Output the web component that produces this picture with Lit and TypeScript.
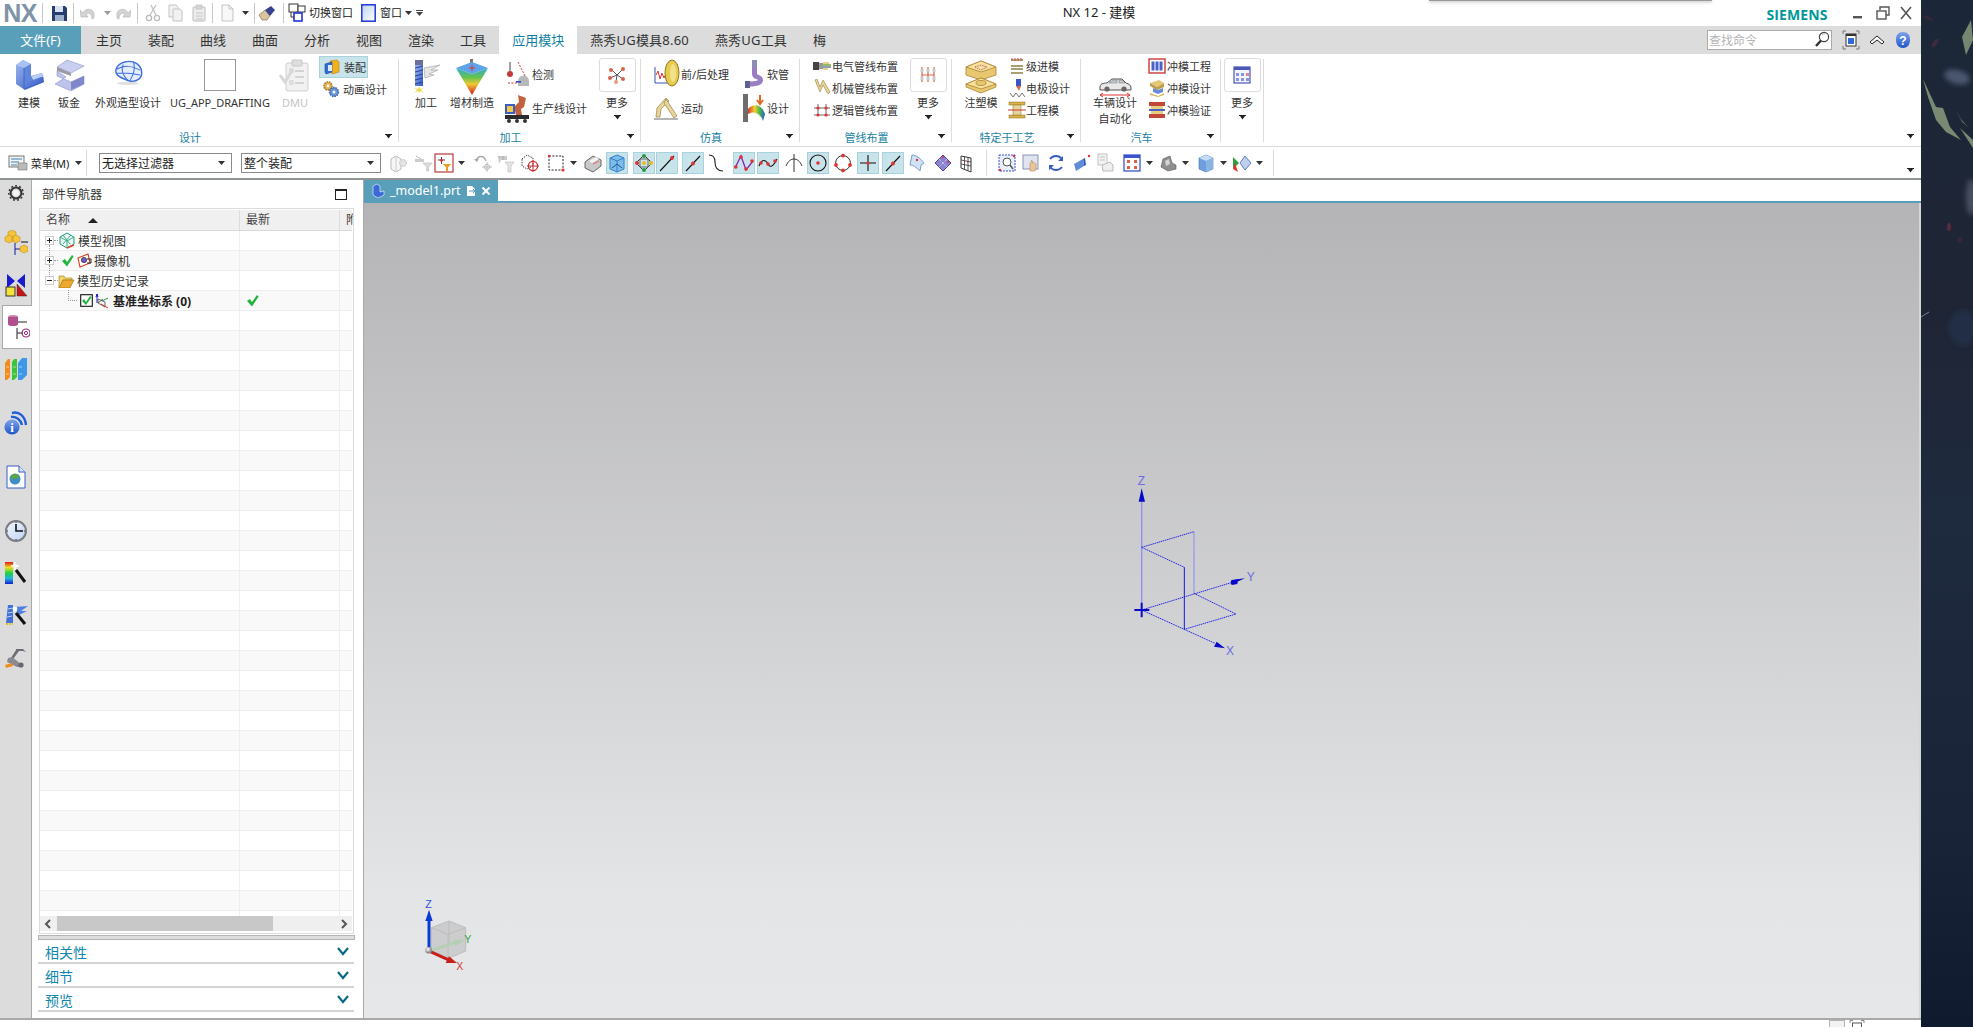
import { LitElement, html, css, svg, nothing } from "lit";
import { customElement } from "lit/decorators.js";

// items are placed in flow, the margin is worked out from the centre each one has in the window
type Placed = { c: number; w: number; t: unknown; cls?: string };

const place = (items: Placed[], start = 0, axis: "left" | "top" = "left") => {
  let end = start;
  return items.map((it) => {
    const gap = Math.round(it.c - it.w / 2 - end);
    end += gap + it.w;
    return html`<div class="slot ${it.cls ?? ""}" style="margin-${axis}:${gap}px;${axis === "left" ? "width" : "height"}:${it.w}px">${it.t}</div>`;
  });
};

const ic = (w: number, h: number, body: unknown, vb?: string) =>
  html`<svg class="ic" width=${w} height=${h} viewBox=${vb ?? `0 0 ${w} ${h}`}>${body}</svg>`;

const caret = html`<svg class="ic" width="7" height="5" viewBox="0 0 7 5"><path d="M0 0h7v1H6L3.5 4.5 1 1H0z" fill="#222"/></svg>`;
const tri = html`<svg class="ic" width="7" height="4" viewBox="0 0 7 4"><path d="M0 0h7L3.5 4z" fill="#333"/></svg>`;
const triGray = html`<svg class="ic" width="7" height="4" viewBox="0 0 7 4"><path d="M0 0h7L3.5 4z" fill="#999"/></svg>`;

/* ---------- ribbon icons ---------- */
const big = {
  model: ic(32, 32, svg`
    <path d="M3 6 10 1l8 4v12l11-3 2 9-19 8-9-6z" fill="url(#gBlue)"/>
    <path d="M3 6 10 1l8 4-7 4z" fill="#a9c2f2"/>
    <path d="M18 17l11-3 2 3-11 4z" fill="#b9cdf5"/>
    <path d="M11 9l7-4v12l2 4-9 4z" fill="#5f86dc"/>
    <path d="M11 9v21l19-7v-5" fill="none" stroke="#3c61bd" stroke-width=".8"/>`),
  sheet: ic(32, 32, svg`
    <path d="M14 1 31 7l-13 7L4 8z" fill="#c9cfee" stroke="#8e94cc" stroke-width=".6"/>
    <path d="M4 8l14 6 0 3L4 12z" fill="#9a9ba6"/>
    <path d="M4 12v5l14 6 13-6v8l-13 7L2 25l11-7z" fill="#bdc4ea" stroke="#8e94cc" stroke-width=".6"/>
    <path d="M18 23l13-6v8l-13 6z" fill="#7f86c9"/>`),
  shape: ic(32, 27, svg`
    <path d="M5 12C8 3 22-1 31 5c7 5 8 14 3 19-4 3-9 4-14 2C12 23 3 20 5 12z" fill="#e4edfd" stroke="#3f6fe0" stroke-width="1.8"/>
    <path d="M6 12c8-5 19-5 29 1M14 6c-3 6-2 12 6 20M27 3c2 7 1 14-4 22M5 17c9-1 21 0 30 2" fill="none" stroke="#3f6fe0" stroke-width="1.3"/>
    <ellipse cx="20" cy="29.5" rx="14" ry="2" fill="#dedede"/>`, "0 0 40 32"),
  drafting: html`<div class="blank"></div>`,
  dmu: ic(32, 34, svg`
    <rect x="7" y="4" width="22" height="28" rx="2" fill="#f1f1f1" stroke="#cfcfcf"/>
    <rect x="13" y="1" width="10" height="6" rx="1" fill="#dedede" stroke="#c6c6c6"/>
    <path d="M16 12h9M16 18h9M16 24h9" stroke="#c9c9c9" stroke-width="1.6"/>
    <rect x="11" y="10" width="3" height="3" fill="none" stroke="#ccc"/><rect x="11" y="22" width="3" height="3" fill="none" stroke="#ccc"/>
    <path d="M1 16l5 7 8-13" fill="none" stroke="#d8d8d8" stroke-width="3"/>`),
  mill: ic(32, 34, svg`
    <rect x="5" y="1" width="8" height="6" fill="#6e6e9a"/>
    <rect x="5" y="6" width="8" height="21" fill="url(#gBlue)"/>
    <path d="M5 9l8-2M5 13l8-2M5 17l8-2M5 21l8-2M5 25l8-2" stroke="#2a3f9a" stroke-width="1"/>
    <path d="M14 9l16-3-9 5 7 0-9 4 5 1-9 3z" fill="#e6e6e6" stroke="#9a9a9a" stroke-width=".6"/>
    <path d="M9 27l-1 3-4-1 3 2-3 3 4-2 1 2 1-2 4 2-3-3 3-2-4 1z" fill="#ecd84a"/>`),
  additive: ic(34, 36, svg`
    <rect x="15" y="0" width="3" height="7" fill="#777"/>
    <path d="M1 9 17 3l16 6-16 6z" fill="#5ea3e8"/>
    <path d="M1 9l16 6 16-6-16 27z" fill="url(#gCone)"/>
    <path d="M14 9h6M17 6v6" stroke="#d33" stroke-width="1"/>`),
  mould: ic(34, 36, svg`
    <path d="M2 8 17 2l15 6v8l-15 5L2 16z" fill="#e8c770" stroke="#a98732" stroke-width=".8"/>
    <path d="M2 8l15 5 15-5-15-6z" fill="#f6e09e" stroke="#a98732" stroke-width=".8"/>
    <path d="M11 8l6-2 6 2-6 3z" fill="none" stroke="#c2616a" stroke-dasharray="1.5 1"/>
    <path d="M2 25l15-6 15 6v3l-15 6-15-6z" fill="#e8c770" stroke="#a98732" stroke-width=".8"/>
    <path d="M2 25l15 5 15-5-15-6z" fill="#f6e09e" stroke="#a98732" stroke-width=".8"/>
    <ellipse cx="17" cy="24" rx="5" ry="2.5" fill="#e8c770" stroke="#a98732" stroke-width=".8"/>`),
  car: ic(34, 24, svg`
    <path d="M2 13c0-3 3-4 7-4l5-4h10l4 4c3 1 5 2 5 5v2H2z" fill="#e8e8e8" stroke="#555" stroke-width="1"/>
    <path d="M11 9l4-3h4v3zM21 6h3l3 3h-6z" fill="#bfc9d2" stroke="#777" stroke-width=".5"/>
    <circle cx="9" cy="15" r="2.6" fill="#666"/><circle cx="26" cy="15" r="2.6" fill="#666"/>
    <path d="M2 21h30M2 21l3-2M2 21l3 2M32 21l-3-2M32 21l-3 2" stroke="#d33" stroke-width="1" fill="none"/>`),
};

const more = {
  spark: ic(20, 20, svg`
    <path d="M10 10 4 4M10 10l6-6M10 10 3 13M10 10l6 4M10 10 9 17" stroke="#555" stroke-width="1"/>
    <circle cx="4" cy="5" r="2" fill="#d8634a"/><circle cx="16" cy="4" r="2" fill="#d8634a"/>
    <circle cx="3" cy="13" r="2" fill="#d8634a"/><circle cx="16" cy="14" r="2" fill="#d8634a"/>
    <circle cx="9" cy="17" r="2" fill="#e0a080"/>`),
  pipes: ic(20, 20, svg`
    <path d="M4 2v15M10 2v15M16 2v15M4 10h12" stroke="#d8634a" stroke-width="1.2" fill="none"/>
    <rect x="2.5" y="4" width="3" height="3" fill="#c9c9c9"/><rect x="8.5" y="4" width="3" height="3" fill="#c9c9c9"/>
    <rect x="14.5" y="4" width="3" height="3" fill="#c9c9c9"/><rect x="2.5" y="12" width="3" height="3" fill="#c9c9c9"/>
    <rect x="8.5" y="12" width="3" height="3" fill="#c9c9c9"/><rect x="14.5" y="12" width="3" height="3" fill="#c9c9c9"/>`),
  table: ic(20, 20, svg`
    <rect x="2" y="2" width="16" height="16" fill="#f2f4fb" stroke="#4a56b8" stroke-width="1.2"/>
    <rect x="2" y="2" width="16" height="3" fill="#4a56b8"/>
    <path d="M4 8h3v3H4zM9 8h3v3H9zM14 8h3v3h-3zM4 13h3v3H4zM9 13h3v3H9zM14 13h3v3h-3z" fill="#8b94d8"/>
    <rect x="14" y="8" width="3" height="3" fill="#d88"/>`),
};

const small = {
  asm: ic(16, 16, svg`
    <path d="M6 2l7-1 2 2v10l-7 2z" fill="#f2b21c" stroke="#b97f10" stroke-width=".6"/>
    <path d="M1 5l7-2v10l-6 2-1-2z" fill="#2f6fd8" stroke="#1c3f8e" stroke-width=".6"/>
    <rect x="4" y="6" width="4" height="6" fill="#dfeaff"/>`),
  anim: ic(18, 18, svg`
    <circle cx="6" cy="6" r="4" fill="#e5b253" stroke="#a97f2c" stroke-dasharray="1.6 .8" stroke-width="1.6"/>
    <circle cx="6" cy="6" r="1.4" fill="#fff"/>
    <circle cx="12" cy="12" r="4.4" fill="#6b96d8" stroke="#3d63a8" stroke-dasharray="1.6 .8" stroke-width="1.6"/>
    <circle cx="12" cy="12" r="1.5" fill="#fff"/>`),
  inspect: ic(24, 30, svg`
    <path d="M5 3v9" stroke="#666" stroke-width="1.2"/><circle cx="5" cy="15" r="3" fill="#c23a3a"/>
    <path d="M13 3l7 14" stroke="#d33" stroke-dasharray="2 1.4"/>
    <path d="M3 24h11" stroke="#d33" stroke-dasharray="2 1.4"/>
    <path d="M13 27v-5a5.5 5.5 0 0 1 11 0v5z" fill="#b8b8b8"/><rect x="11" y="22" width="5" height="1.6" fill="#2746c8"/>`),
  line: ic(26, 30, svg`
    <path d="M14 2l8 3-2 9-3 2 1 6h-6l-2-8 5-5z" fill="#c2613e"/>
    <rect x="1" y="11" width="10" height="10" fill="#3a5ec2"/><rect x="3" y="13" width="6" height="6" fill="#f2c94c"/>
    <rect x="1" y="22" width="24" height="4" fill="#2b2b2b"/>
    <circle cx="5" cy="28" r="2" fill="#333"/><circle cx="13" cy="28" r="2" fill="#333"/><circle cx="21" cy="28" r="2" fill="#333"/>`),
  prepost: ic(26, 30, svg`
    <path d="M1 8v16h14" fill="none" stroke="#3555b8" stroke-width="1"/>
    <path d="M2 16l2-4 2 8 2-6 2 5 2-4 3 2" fill="none" stroke="#d33" stroke-width="1"/>
    <ellipse cx="18" cy="14" rx="7" ry="13" fill="#e6cb4e" stroke="#8e7a22"/>
    <ellipse cx="19" cy="14" rx="3" ry="9" fill="#f3e28d"/>`),
  motion: ic(27, 26, svg`
    <path d="M1 24h24" stroke="#b4b4b4" stroke-width="2"/>
    <path d="M3 22 4 13l9-10 3 3-8 8-1 8z" fill="#e8d59a" stroke="#978349" stroke-width=".7"/>
    <path d="M13 4l11 17-3 2L11 8z" fill="#e8d59a" stroke="#978349" stroke-width=".7"/>`),
  hose: ic(22, 30, svg`
    <rect x="9" y="1" width="5" height="7" fill="#8d8db3"/>
    <path d="M11.5 8v7c0 4 6 2 6 6 0 3-5 4-11 4" fill="none" stroke="#9a7ec4" stroke-width="5"/>
    <rect x="2" y="22" width="5" height="7" fill="#5f5f92"/>`),
  design: ic(24, 30, svg`
    <rect x="1" y="1" width="5" height="28" fill="#6d6d6d"/>
    <path d="M6 16c5-6 14-5 17 5l-2 7c-2-7-9-11-15-7z" fill="url(#gFlow)"/>
    <path d="M18 2v8M15 7l3 4 3-4" fill="none" stroke="#e06a24" stroke-width="2"/>`),
  wire: ic(18, 12, svg`
    <rect x="0" y="2" width="6" height="8" fill="#444"/><rect x="6" y="3" width="4" height="6" fill="#999"/>
    <path d="M10 3h6M10 5h8M10 7h8M10 9h5" stroke-width="1.2" stroke="#d8a020"/><path d="M10 5h8" stroke="#3aa544"/><path d="M10 7h8" stroke="#3a6ad8"/>`),
  mech: ic(18, 18, svg`
    <path d="M2 1l5 12 3-7 5 9 2-2-7-12-3 7-3-8z" fill="#e8d59a" stroke="#a8914e" stroke-width=".7"/>`),
  logic: ic(18, 18, svg`
    <path d="M1 7h16M1 14h16M5 3v12M13 3v12" stroke="#444" stroke-width=".8"/>
    <circle cx="5" cy="7" r="1.6" fill="#d33"/><circle cx="13" cy="7" r="1.6" fill="#d33"/>
    <circle cx="5" cy="14" r="1.6" fill="#d33"/><circle cx="13" cy="14" r="1.6" fill="#d33"/>`),
  prog: ic(16, 18, svg`
    <path d="M2 3h12M2 9h12M2 12h12M2 16h12" stroke="#8c8148" stroke-width="1.6"/>
    <path d="M3 1v3M6 1v3M9 1v3M12 1v3" stroke="#c55" stroke-width="1"/>`),
  electrode: ic(16, 20, svg`
    <rect x="7" y="1" width="5" height="7" fill="#3d55c0"/><path d="M7 8h5l-2 5z" fill="#d86a4a"/>
    <path d="M1 15l3 4 3-4 3 4 3-4 3 4" fill="none" stroke="#777"/>`),
  eng: ic(18, 18, svg`
    <rect x="1" y="1" width="16" height="3" fill="#d8b24a" stroke="#8a6f25" stroke-width=".5"/><rect x="1" y="14" width="16" height="3" fill="#d8b24a" stroke="#8a6f25" stroke-width=".5"/>
    <rect x="5" y="4" width="8" height="10" fill="#e6d59a" stroke="#8a6f25" stroke-width=".5"/>
    <path d="M0 9h18" stroke="#c33"/>`),
  die: ic(18, 16, svg`
    <rect x="1" y="1" width="16" height="14" fill="#fff" stroke="#c83a3a" stroke-width="1.4"/>
    <rect x="3.5" y="3.5" width="3" height="9" fill="#4a62c8"/><rect x="7.5" y="3.5" width="3" height="9" fill="#4a62c8"/><rect x="11.5" y="3.5" width="3" height="9" fill="#4a62c8"/>`),
  dieD: ic(18, 18, svg`
    <path d="M2 4l9-3 5 3-7 4z" fill="#e4c878"/><path d="M2 4v3l7 4 7-3V4l-7 4z" fill="#bf9d45"/>
    <path d="M5 9l5 2 5-2v4l-5 2-5-2z" fill="#6b8ad8"/><path d="M2 14l8 3 6-3v2l-6 2-8-2z" fill="#d6b85e"/>`),
  dieV: ic(18, 18, svg`
    <rect x="1" y="1" width="16" height="4" fill="#c0473a"/><rect x="1" y="13" width="16" height="4" fill="#c0473a"/>
    <rect x="3" y="5" width="12" height="3" fill="#e6cf7c"/><rect x="3" y="10" width="12" height="3" fill="#e6cf7c"/>
    <rect x="1" y="8" width="16" height="2" fill="#4a62c8"/>`),
};

/* ---------- quick access and toolbar icons ---------- */
const q = {
  save: ic(18, 18, svg`<path d="M2 2h13l2 2v13H2z" fill="#263d6e"/><rect x="5" y="2" width="8" height="6" fill="#d8e2f2"/><rect x="5" y="11" width="9" height="6" fill="#9eb0cc"/>`),
  undo: ic(16, 16, svg`<path d="M3 8c2-5 9-5 11 0v5l-2 1c0-4-2-7-6-5l2 3-7 0-1-7z" fill="#d4d4d4" stroke="#b0b0b0" stroke-width=".6"/>`),
  redo: ic(16, 16, svg`<path d="M13 8c-2-5-9-5-11 0v5l2 1c0-4 2-7 6-5l-2 3 7 0 1-7z" fill="#d4d4d4" stroke="#b0b0b0" stroke-width=".6"/>`),
  cut: ic(16, 18, svg`<path d="M12 1 6 11M7 1l5 10" stroke="#c4c4c4" stroke-width="1.4"/><circle cx="5" cy="14" r="2.6" fill="none" stroke="#bdbdbd" stroke-width="1.4"/><circle cx="13" cy="14" r="2.6" fill="none" stroke="#bdbdbd" stroke-width="1.4"/>`),
  copy: ic(16, 18, svg`<path d="M2 1h7l2 2v10H2z" fill="#f2f2f2" stroke="#c4c4c4"/><path d="M6 5h7l2 2v10H6z" fill="#f2f2f2" stroke="#c4c4c4"/>`),
  paste: ic(16, 18, svg`<rect x="2" y="3" width="12" height="14" rx="1" fill="#ececec" stroke="#bdbdbd"/><rect x="5" y="1" width="6" height="4" fill="#d4d4d4" stroke="#bdbdbd" stroke-width=".6"/><path d="M5 9h7M5 12h7M5 15h7" stroke="#c6c6c6"/>`),
  page: ic(14, 18, svg`<path d="M2 1h7l4 4v12H2z" fill="#f8f8f8" stroke="#c4c4c4"/><path d="M9 1v4h4" fill="none" stroke="#c4c4c4"/>`),
  eraser: ic(18, 16, svg`<path d="M1 10l6-5 5 6-3 4H4z" fill="#d8c49a" stroke="#7d6a44" stroke-width=".6"/><path d="M7 5l6-4 4 4-5 6z" fill="#37418f"/>`),
  sw: ic(18, 20, svg`<rect x="1" y="1" width="9" height="8" fill="#fff" stroke="#333"/><rect x="10" y="3" width="7" height="6" fill="#fff" stroke="#333"/><rect x="6" y="10" width="8" height="8" fill="#fff" stroke="#1e36d8" stroke-width="1.6"/><path d="M3 9v5h3" fill="none" stroke="#333"/>`),
  win: ic(15, 18, svg`<rect x=".8" y=".8" width="13.4" height="16.4" fill="url(#gWin)" stroke="#1e36d8" stroke-width="1.5"/>`),
  funnelBar: html`<svg class="ic" width="7" height="6" viewBox="0 0 7 6"><path d="M0 0h7v1H0zM0 2h7L3.5 6z" fill="#444"/></svg>`,
  search: ic(16, 18, svg`<circle cx="10" cy="6" r="4.6" fill="#fff" stroke="#444" stroke-width="1.2"/><path d="M7 9.5 2 15" stroke="#333" stroke-width="2.4"/><path d="M8 4a3 3 0 0 1 3-1" stroke="#aaa" fill="none"/>`),
  full: ic(18, 20, svg`<path d="M1 4V1h3M14 1h3v3M1 16v3h3M14 19h3v-3" stroke="#777" fill="none"/><rect x="4" y="4" width="10" height="12" fill="#fff" stroke="#333"/><rect x="4" y="4" width="10" height="2" fill="#333"/><rect x="6" y="8" width="6" height="6" fill="#2e6ad8"/>`),
  up: ic(16, 12, svg`<path d="M1 8l7-6 7 6-2 2-5-4-5 4z" fill="#fff" stroke="#222"/>`),
  help: ic(16, 18, svg`<path d="M8 1c5 0 7 3 7 8s-3 8-7 8-7-3-7-8 2-8 7-8z" fill="url(#gHelp)"/><text x="8" y="13.5" text-anchor="middle" font-size="12" font-weight="700" font-family="Liberation Sans" fill="#fff">?</text>`),
};

const box = (s: unknown) => ic(20, 20, s);
const t = {
  partG: box(svg`<path d="M3 6l5-3 5 3v10l-5 3-5-3z" fill="#f6f6f6" stroke="#bbb"/><path d="M8 3v16" stroke="#ccc"/><circle cx="15" cy="10" r="3.4" fill="#e4e4e4" stroke="#bbb" stroke-dasharray="1.4 .8"/>`),
  fun: box(svg`<path d="M1 6h9v3H1z" fill="#ccc"/><path d="M9 10h9l-3.4 4v4h-2v-4z" fill="#ddd" stroke="#bbb" stroke-width=".6"/><path d="M2 3l5 3" stroke="#bbb"/>`),
  redBox: box(svg`<rect x="1" y="1" width="18" height="18" fill="#fff" stroke="#b8383d" stroke-width="1.2"/><path d="M4 7h7M7.5 4v7" stroke="#444"/><circle cx="7.5" cy="7.5" r="1.4" fill="#d33"/><path d="M9 11h8l-3 3.4V18h-2v-3.6z" fill="#e8a020"/>`),
  arrowCross: box(svg`<path d="M3 8C5 2 11 2 13 8" fill="none" stroke="#aaa" stroke-width="1.4"/><path d="M1 6l3 3 2-3z" fill="#aaa"/><path d="M14 9v10M9 14h10" stroke="#bbb"/><circle cx="14" cy="14" r="2.6" fill="none" stroke="#bbb"/>`),
  partF: box(svg`<path d="M2 3h9v4H5l-2 4z" fill="#ccc"/><path d="M2 3l2 2M7 3v4" stroke="#aaa"/><path d="M9 9h9l-3 4v6h-3v-6z" fill="#e4e4e4" stroke="#bbb" stroke-width=".6"/>`),
  dotCube: box(svg`<path d="M2 6l5-4 6 3v8l-6 3-5-3z" fill="none" stroke="#333" stroke-dasharray="1.4 1.2"/><circle cx="13" cy="13" r="4.6" fill="none" stroke="#c82a2a" stroke-width="1.2"/><path d="M13 7v12M7 13h12" stroke="#c82a2a"/>`),
  dash: box(svg`<rect x="3" y="3" width="14" height="14" fill="none" stroke="#222" stroke-dasharray="2 1.4"/><circle cx="17" cy="17" r="1.6" fill="#d33"/><circle cx="3" cy="3" r="1.2" fill="#d33"/>`),
  grayBox: box(svg`<path d="M2 9l8-6 8 4v6l-8 6-8-4z" fill="#c8c8c8" stroke="#666"/><path d="M6 8l7-4 3 2-7 4z" fill="#f4f4f4"/><path d="M10 11l6-3" stroke="#d66"/>`),
  blueCube: box(svg`<path d="M3 5l7-3 7 3v11l-7 3-7-3z" fill="#7fbce8" stroke="#3082c8"/><path d="M3 5l7 3 7-3M10 8v11" fill="none" stroke="#3082c8"/><path d="M5 15l5-4 5 4" fill="none" stroke="#1c4fa0"/>`),
  star: box(svg`<path d="M10 2 18 10 10 18 2 10z" fill="none" stroke="#333"/><path d="M6 6h8v8H6z" fill="none" stroke="#666"/><circle cx="10" cy="3" r="2" fill="#2c9a3c"/><circle cx="3" cy="10" r="2" fill="#d33"/><circle cx="17" cy="10" r="2" fill="#e0c020"/><circle cx="10" cy="17" r="2" fill="#2c9a3c"/><circle cx="10" cy="10" r="2" fill="#e0c020"/>`),
  lineEnd: box(svg`<path d="M3 18 17 3" stroke="#111" stroke-width="1.1"/><circle cx="15" cy="5" r="1.9" fill="#d33"/>`),
  lineMid: box(svg`<path d="M3 18 17 3" stroke="#111" stroke-width="1.1"/><circle cx="10" cy="10.5" r="2" fill="#d33"/>`),
  scurve: box(svg`<path d="M3 2c4 0 6 2 6 7s2 9 8 9" fill="none" stroke="#222" stroke-width="1.1"/>`),
  zig: box(svg`<path d="M1 15 7 3l5 14 7-9" fill="none" stroke="#8a1fa8" stroke-width="1.3"/><circle cx="7" cy="4" r="1.8" fill="#d33"/><circle cx="1.8" cy="14" r="1.8" fill="#d33"/><circle cx="12" cy="16" r="1.8" fill="#d33"/><circle cx="18" cy="8" r="1.8" fill="#d33"/>`),
  wave: box(svg`<path d="M1 13c3-8 7-6 9-2s5 3 9-5" fill="none" stroke="#111" stroke-width="1.1"/><circle cx="3" cy="10" r="1.8" fill="#d33"/><circle cx="10" cy="11" r="1.8" fill="#d33"/><circle cx="17" cy="8" r="1.8" fill="#d33"/>`),
  arc: box(svg`<path d="M2 13c2-5 5-7 8-7s6 2 8 7M10 1v18" fill="none" stroke="#333"/>`),
  circle: box(svg`<circle cx="10" cy="10" r="8" fill="none" stroke="#111" stroke-width="1.1"/><circle cx="10" cy="10" r="1.8" fill="#d33"/>`),
  circleP: box(svg`<circle cx="10" cy="10" r="7.4" fill="none" stroke="#333"/><circle cx="10" cy="2.6" r="1.9" fill="#d33"/><circle cx="3" cy="12" r="1.9" fill="#d33"/><circle cx="17" cy="12" r="1.9" fill="#d33"/><circle cx="10" cy="17.4" r="1.9" fill="#d33"/>`),
  cross: box(svg`<path d="M10 2v16M2 10h16" stroke="#111" stroke-width="1.1"/><circle cx="10" cy="10" r="1.6" fill="#d33"/>`),
  diag: box(svg`<path d="M3 18 17 3" stroke="#111" stroke-width="1.1"/><circle cx="10" cy="10.5" r="2" fill="#d33"/>`),
  surf: box(svg`<path d="M4 2c4 0 8 3 12 8l-3 2-1 6C8 14 5 12 2 12z" fill="#cfe2f6" stroke="#7c9cc4"/><circle cx="9" cy="7" r="1.2" fill="#d33"/>`),
  diamond: box(svg`<path d="M10 2l8 8-8 8-8-8z" fill="#8a83cf" stroke="#4d47a0"/><path d="M6 6l8 8M14 6l-8 8" stroke="#fff" stroke-width=".7" stroke-dasharray="1 1"/><circle cx="10" cy="4" r="1" fill="#d33"/><circle cx="15" cy="9" r="1" fill="#d33"/>`),
  grid: box(svg`<path d="M4 3l10 2v14L4 15z" fill="#fff" stroke="#333"/><path d="M4 7l10 2M4 11l10 2M7.5 4v12M11 4.5v13" stroke="#333" stroke-width=".8"/><path d="M7 8h1M10 9h1" stroke="#c33"/>`),
  zoomF: box(svg`<rect x="2" y="2" width="16" height="16" fill="#e9eefc" stroke="#3b55c8" stroke-dasharray="2 1"/><circle cx="10" cy="9" r="4" fill="#fff" stroke="#555"/><path d="M13 12l3 4" stroke="#555" stroke-width="1.4"/><circle cx="3" cy="17" r="1.2" fill="#d33"/><circle cx="17" cy="3" r="1.2" fill="#d33"/>`),
  hand: box(svg`<rect x="2" y="2" width="15" height="14" fill="#dfe4f0" stroke="#8a93b8"/><path d="M9 18V10l1.4-1V7l1 1v2l1-1 1 1 1.6 1v5l-1 2z" fill="#e8c49a" stroke="#b98e60" stroke-width=".6"/>`),
  rot: box(svg`<path d="M4 6c3-4 9-4 12 0M16 14c-3 4-9 4-12 0" fill="none" stroke="#3a5ec8" stroke-width="1.8"/><path d="M17 3v5h-5zM3 17v-5h5z" fill="#3a5ec8"/>`),
  prism: box(svg`<path d="M2 11l9-5 1 7-8 5z" fill="#5f8bd8"/><path d="M11 6l2-1 1 7-2 1z" fill="#2f5fb8"/><circle cx="17" cy="3" r="1.2" fill="#d33"/>`),
  docG: box(svg`<rect x="3" y="1" width="9" height="11" fill="#f2f2f2" stroke="#c4c4c4"/><path d="M5 4h5M5 7h5" stroke="#c4c4c4"/><path d="M7 12l8-3 3 3v6H8z" fill="#eee" stroke="#bbb"/>`),
  winR: box(svg`<rect x="2" y="2" width="16" height="16" fill="#fff" stroke="#3b55c8" stroke-width="1.3"/><rect x="2" y="2" width="16" height="3" fill="#3b55c8"/><path d="M5 7h3v3H5zM12 7h3v3h-3zM5 13h3v3H5zM12 13h3v3h-3z" fill="#d8634a"/>`),
  part: box(svg`<path d="M3 14l2-8 7-3 2 7 4 2v4l-8 2z" fill="#8e8e8e" stroke="#555" stroke-width=".6"/><path d="M7 8l4-2 1 5-4 2z" fill="#d4d4d4"/>`),
  cube: box(svg`<path d="M3 5l7-3 7 3v11l-7 3-7-3z" fill="#6e9edc" stroke="#4a74b8" stroke-width=".6"/><path d="M3 5l7 3 7-3-7-3z" fill="#c4dcf6"/><path d="M10 8v11l7-3V5z" fill="#8bb4e6"/>`),
  flip: box(svg`<path d="M1 4l6 6-6 6z" fill="#2fa044"/><path d="M3 10l3 9-5-3z" fill="#d33"/><path d="M13 3l6 7-6 7-5-7z" fill="#bdd0ee" stroke="#5f7ec4"/>`),
  menu: ic(20, 20, svg`<rect x="1" y="3" width="15" height="11" fill="#f4f4f4" stroke="#777"/><path d="M3 6h11M3 9h8M3 12h6" stroke="#3a7fb0"/><path d="M10 10h9v7h-9z" fill="#bbb" stroke="#777" stroke-width=".6"/>`),
};

/* ---------- left rail ---------- */
const rail = {
  gear: ic(18, 18, svg`<circle cx="9" cy="9" r="5.4" fill="none" stroke="#333" stroke-width="2"/><circle cx="9" cy="9" r="7.2" fill="none" stroke="#333" stroke-width="1.4" stroke-dasharray="2 2.1"/><circle cx="9" cy="9" r="3" fill="#f4f4f4"/>`),
  assem: ic(24, 26, svg`
    <path d="M4 2l4-2 4 2v4l-4 2-4-2z" fill="#f2c53c" stroke="#c78f1c" stroke-width=".6"/>
    <path d="M1 7l4-2 4 2v4l-4 2-4-2zM8 7l4-2 4 2v4l-4 2-4-2z" fill="#f2c53c" stroke="#c78f1c" stroke-width=".6"/>
    <path d="M11 13V25M11 19h7" stroke="#1a1a9a" stroke-width="1"/><path d="M17 12h7" stroke="#111"/>
    <path d="M16 17l4-2 4 2v4l-4 2-4-2z" fill="#f2c53c" stroke="#c78f1c" stroke-width=".6"/>`),
  constraint: ic(24, 26, svg`
    <path d="M3 2l8 7-8 7zM21 2l-8 7 8 7z" fill="#1a1ad0"/><rect x="2" y="15" width="9" height="9" fill="#f5e23a" stroke="#333"/>
    <path d="M13 24V12l10 12z" fill="#c81414" stroke="#333" stroke-width=".5"/>`),
  part: ic(24, 26, svg`
    <ellipse cx="7" cy="3" rx="5" ry="2" fill="#c880a8"/><rect x="2" y="3" width="10" height="7" fill="#b0508c"/><ellipse cx="7" cy="10" rx="5" ry="2" fill="#b0508c"/>
    <path d="M12 8h9M11 14v11M11 19h6" stroke="#222" stroke-width="1"/>
    <circle cx="20" cy="19" r="4" fill="none" stroke="#92287c" stroke-width="1.2"/><circle cx="20" cy="19" r="1.6" fill="none" stroke="#92287c"/>`),
  books: ic(24, 24, svg`
    <path d="M1 6l3-4h2v18l-3 3H1z" fill="#ef8c1c"/><path d="M8 5l2-3h3v18l-3 3H8z" fill="#3ec43a"/>
    <path d="M14 6l4-5h5v17l-5 5h-4z" fill="#3e98e8"/><path d="M2 10h3M9 10h3M15 10h3M2 17h3M9 17h3M15 17h3" stroke="#fff" stroke-opacity=".5"/>`),
  info: ic(26, 26, svg`
    <path d="M9 3c7-2 13 3 14 12M8 7c5-1 10 3 11 8" fill="none" stroke="#1f5fd8" stroke-width="2.4"/>
    <circle cx="9" cy="17" r="7.6" fill="url(#gHelp)"/><text x="9" y="22" text-anchor="middle" font-size="13" font-weight="700" font-family="Liberation Serif" fill="#fff">i</text>`),
  doc: ic(20, 24, svg`
    <path d="M1 1h12l6 6v16H1z" fill="#fff" stroke="#3560c8"/><path d="M13 1v6h6" fill="#dbe6fb" stroke="#3560c8"/>
    <circle cx="9" cy="14" r="5.5" fill="#3f8fc4"/><path d="M5 11c3-3 6-2 8 0l-2 3-4-1-1 3z" fill="#5da53c"/>`),
  clock: ic(24, 24, svg`
    <circle cx="12" cy="12" r="10" fill="url(#gClock)" stroke="#7b7b82" stroke-width="2"/><path d="M12 5v7h7" fill="none" stroke="#111" stroke-width="1.6"/>
    <path d="M12 3v1M21 12h-1M12 21v-1M3 12h1" stroke="#333"/>`),
  ramp: ic(24, 24, svg`
    <rect x="1" y="1" width="8" height="22" fill="url(#gRamp)"/>
    <path d="M12 9l9 12" stroke="#111" stroke-width="3"/><path d="M11 1v8M7 5h8" stroke="#fff" stroke-width="1.4"/><circle cx="11" cy="5" r="2" fill="#fff"/>`),
  wand: ic(26, 24, svg`
    <path d="M5 2h5v18H3z" fill="#3f72d8"/><path d="M5 6l5-1M5 10l5-1M4 14l5-1" stroke="#bcd0f6"/>
    <path d="M11 4l14-1-7 5 6 0-8 4z" fill="#4f80e0"/><path d="M3 21l7 0" stroke="#e0c030" stroke-width="2" stroke-dasharray="2 1"/>
    <path d="M13 10l9 11" stroke="#111" stroke-width="3"/><circle cx="12" cy="6" r="2.4" fill="#fff"/>`),
  tools: ic(24, 26, svg`
    <path d="M12 5l7 0 3 3-3-1h-4l-8 11-2-1 7-11z" fill="#6e6e76"/><path d="M4 14l4-1 9 7-1 3-3 0-10-5z" fill="#8a8a92"/>
    <path d="M1 21l7-2 1 3-7 2z" fill="#ef8c1c"/><circle cx="17" cy="21" r="2.6" fill="#66666e"/>`),
};

/* ---------- tree icons ---------- */
const tree = {
  view: ic(18, 18, svg`
    <path d="M9 1l7 4v7l-7 4-7-4V5z" fill="#e7f6ee" stroke="#1f9c7c"/><path d="M2 5l7 4 7-4M9 9v7M5 3l7 9M13 3 5 12" fill="none" stroke="#1f9c7c" stroke-width=".8"/>
    <path d="M9 16l7-3" stroke="#e0482c" stroke-width="1.4"/>`),
  check: ic(13, 13, svg`<path d="M1 7l3-2 2 3 5-7 1.6 1.6L6 12.6z" fill="#22b43c"/>`),
  cam: ic(15, 15, svg`
    <path d="M1 5l10-4 2 9-10 4z" fill="#fff" stroke="#e0381c" stroke-width="1.1"/><circle cx="7" cy="7" r="2.6" fill="#7a5ac8" stroke="#222" stroke-width=".7"/>
    <path d="M10 6h4v4h-4" fill="none" stroke="#222"/>`),
  folder: ic(17, 14, svg`<path d="M1 2h5l1 2h7v2H5l-3 8H1z" fill="#f5d768" stroke="#9a7a1c" stroke-width=".6"/><path d="M5 6h11l-4 8H1z" fill="#eda92c" stroke="#9a6a1c" stroke-width=".6"/>`),
  box: ic(13, 13, svg`<rect x=".7" y=".7" width="11.6" height="11.6" fill="#fff" stroke="#111" stroke-width="1.1"/><path d="M2 7l2-2 2 3 4-6 1.5 1.3L6 11z" fill="#22b43c"/>`),
  csys: ic(16, 16, svg`
    <path d="M3 1v9M2 4l1-3 1 3" stroke="#1a1ad0" fill="none"/><path d="M4 6l7 3 0 5-7-4zM4 10l5-4" fill="none" stroke="#444" stroke-width=".8"/>
    <path d="M8 8l6-3" stroke="#2aa044"/><path d="M7 11l7 4" stroke="#d33"/>`),
};

const chevron = ic(12, 9, svg`<path d="M1 1l5 6 5-6" fill="none" stroke="#0b6a8a" stroke-width="2.2"/>`);

/* ---------- builders ---------- */
const bigBtn = (label: unknown, icon: unknown, w: number, cls = "") =>
  html`<div class="big ${cls}" style="width:${w}px"><div class="big-ic">${icon}</div><div class="big-lb">${label}</div></div>`;

const moreBtn = (icon: unknown) =>
  html`<div class="big more"><div class="more-box">${icon}</div><div class="big-lb">更多</div><div class="more-tri">${caret}</div></div>`;

type Row = [unknown, string, boolean?];
const stack = (rows: Row[], icoW: number, w: number, cls: string) =>
  html`<div class="stack ${cls}" style="width:${w}px">
    ${rows.map(([i, l, on]) => html`<div class="row-s ${on ? "on" : ""}"><span class="row-ic" style="width:${icoW}px">${i}</span><span>${l}</span></div>`)}
  </div>`;

const groups: { label: string; w: number; pad: number; body: unknown }[] = [
  { label: "设计", w: 398, pad: 9, body: html`
      ${bigBtn("建模", big.model, 40)}${bigBtn("钣金", big.sheet, 40)}
      ${bigBtn("外观造型设计", big.shape, 78)}${bigBtn("UG_APP_DRAFTING", big.drafting, 106)}
      ${bigBtn("DMU", big.dmu, 44, "off")}
      ${stack([[small.asm, "装配", true], [small.anim, "动画设计"]], 24, 76, "rows-2s")}` },
  { label: "加工", w: 241, pad: 7, body: html`
      ${bigBtn("加工", big.mill, 40)}${bigBtn("增材制造", big.additive, 52)}
      ${stack([[small.inspect, "检测"], [small.line, "生产线设计"]], 30, 97, "rows-2 ind")}
      ${moreBtn(more.spark)}` },
  { label: "仿真", w: 158, pad: 11, body: html`
      ${stack([[small.prepost, "前/后处理"], [small.motion, "运动"]], 29, 89, "rows-2")}
      ${stack([[small.hose, "软管"], [small.design, "设计"]], 26, 56, "rows-2")}` },
  { label: "管线布置", w: 151, pad: 12, body: html`
      ${stack([[small.wire, "电气管线布置"], [small.mech, "机械管线布置"], [small.logic, "逻辑管线布置"]], 20, 95, "rows-3")}
      ${moreBtn(more.pipes)}` },
  { label: "特定于工艺", w: 128, pad: 3, body: html`
      ${bigBtn("注塑模", big.mould, 52)}
      ${stack([[small.prog, "级进模"], [small.electrode, "电极设计"], [small.eng, "工程模"]], 19, 70, "rows-3")}` },
  { label: "汽车", w: 139, pad: 2, body: html`
      ${bigBtn(html`车辆设计<br />自动化`, big.car, 64, "car")}
      ${stack([[small.die, "冲模工程"], [small.dieD, "冲模设计"], [small.dieV, "冲模验证"]], 20, 70, "rows-3")}` },
  { label: "", w: 42, pad: 0, body: moreBtn(more.table) },
];

const tabs = ["主页", "装配", "曲线", "曲面", "分析", "视图", "渲染", "工具", "应用模块", "燕秀UG模具8.60", "燕秀UG工具", "梅"];

const toolbar: [number, unknown, boolean?, boolean?][] = [
  [398, t.partG], [424, t.fun], [444, t.redBox, false, true], [483, t.arrowCross], [506, t.partF], [530, t.dotCube],
  [556, t.dash, false, true], [593, t.grayBox], [617, t.blueCube, true], [644, t.star, true], [667, t.lineEnd, true],
  [693, t.lineMid, true], [716, t.scurve], [744, t.zig, true], [768, t.wave, true], [794, t.arc], [818, t.circle, true],
  [843, t.circleP], [868, t.cross, true], [893, t.diag, true], [918, t.surf], [943, t.diamond], [967, t.grid],
];
const toolbar2: [number, unknown, boolean?, boolean?][] = [
  [1007, t.zoomF], [1031, t.hand], [1056, t.rot], [1082, t.prism], [1105, t.docG], [1132, t.winR, false, true],
  [1168, t.part, false, true], [1206, t.cube, false, true], [1242, t.flip, false, true],
];

const toolItems = (list: [number, unknown, boolean?, boolean?][]) =>
  list.flatMap(([c, i, on, arrow]) => {
    const out: Placed[] = [{ c, w: 22, t: html`<div class="tool ${on ? "on" : ""}">${i}</div>` }];
    if (arrow) out.push({ c: c + 17.5, w: 7, t: tri });
    return out;
  });

const titleItems: Placed[] = [
  { c: 20, w: 34, t: html`<span class="nx">NX</span>` },
  { c: 42, w: 1, t: html`<i class="qsep"></i>` },
  { c: 59, w: 18, t: q.save },
  { c: 73, w: 1, t: html`<i class="qsep"></i>` },
  { c: 88, w: 16, t: q.undo }, { c: 107, w: 7, t: triGray }, { c: 123, w: 16, t: q.redo },
  { c: 137, w: 1, t: html`<i class="qsep"></i>` },
  { c: 152, w: 16, t: q.cut }, { c: 175, w: 16, t: q.copy }, { c: 199, w: 16, t: q.paste },
  { c: 212, w: 1, t: html`<i class="qsep"></i>` },
  { c: 227, w: 14, t: q.page }, { c: 245, w: 7, t: tri },
  { c: 254, w: 1, t: html`<i class="qsep"></i>` },
  { c: 267, w: 18, t: q.eraser },
  { c: 283, w: 1, t: html`<i class="qsep"></i>` },
  { c: 297, w: 18, t: q.sw },
  { c: 331, w: 46, t: html`<span class="qtxt">切换窗口</span>` },
  { c: 368, w: 15, t: q.win },
  { c: 391, w: 24, t: html`<span class="qtxt">窗口</span>` },
  { c: 408, w: 7, t: tri }, { c: 419, w: 7, t: q.funnelBar },
  { c: 1099, w: 90, t: html`<span class="win-title">NX 12 - 建模</span>` },
  { c: 1797, w: 64, t: html`<span class="siemens">SIEMENS</span>` },
  { c: 1858, w: 10, t: ic(10, 4, svg`<rect width="9" height="2.4" y="1" fill="#555"/>`), cls: "low" },
  { c: 1883, w: 14, t: ic(14, 14, svg`<path d="M4 4V1h9v8h-3" fill="none" stroke="#555" stroke-width="1.4"/><rect x="1" y="5" width="9" height="8" fill="#fff" stroke="#555" stroke-width="1.4"/>`) },
  { c: 1906, w: 14, t: ic(14, 14, svg`<path d="M2 1l10 12M12 1 2 13" stroke="#555" stroke-width="1.6"/>`) },
];

const railItems: Placed[] = [
  { c: 193, w: 26, t: rail.gear, cls: "rail-it" },
  { c: 243, w: 30, t: rail.assem, cls: "rail-it" },
  { c: 285, w: 30, t: rail.constraint, cls: "rail-it" },
  { c: 327, w: 44, t: rail.part, cls: "rail-it rail-on" },
  { c: 369, w: 30, t: rail.books, cls: "rail-it" },
  { c: 423, w: 30, t: rail.info, cls: "rail-it" },
  { c: 477, w: 30, t: rail.doc, cls: "rail-it" },
  { c: 531, w: 30, t: rail.clock, cls: "rail-it" },
  { c: 573, w: 30, t: rail.ramp, cls: "rail-it" },
  { c: 615, w: 30, t: rail.wand, cls: "rail-it" },
  { c: 657, w: 30, t: rail.tools, cls: "rail-it" },
];

const expander = (open: boolean) =>
  html`<span class="exp"><i class=${open ? "minus" : "plus"}></i></span>`;

@customElement("app-root")
export class AppRoot extends LitElement {
  static styles = css`
    :host {
      display: flex;
      width: 1973px;
      height: 1027px;
      overflow: hidden;
      background: #fff;
      font-family: "Noto Sans", "Noto Sans CJK SC", sans-serif;
      font-size: 11px;
      color: #333;
    }
    * { box-sizing: border-box; }
    .ic { display: block; flex: none; }
    .slot { flex: none; display: flex; align-items: center; justify-content: center; white-space: nowrap; }
    .defs { position: absolute; width: 0; height: 0; }

    .window { width: 1921px; height: 1027px; display: flex; flex-direction: column; position: relative; flex: none; }
    .wall { width: 52px; height: 1027px; flex: none; display: block; }

    .titlebar { height: 26px; display: flex; align-items: center; flex: none; }
    .nx { font: 700 25px/26px "Liberation Sans", sans-serif; color: #7f93a6; letter-spacing: -0.5px; }
    .qsep { display: block; width: 1px; height: 20px; background: #c8c8c8; }
    .qtxt { font-size: 11px; color: #222; padding-bottom: 2px; }
    .win-title { font-size: 13px; color: #222; padding-bottom: 4px; }
    .siemens { font: 700 14px/26px "Open Sans", sans-serif; color: #009999; letter-spacing: 0.1px; padding-top: 3px; }
    .low { padding-top: 7px; }
    .shadow {
      position: absolute; left: 1429px; top: 0; width: 283px; height: 1px; background: #999;
      box-shadow: 0 1px 3px rgba(0, 0, 0, .45);
    }

    .tabs { height: 28px; background: #dcdcdc; display: flex; align-items: stretch; flex: none; font-size: 13px; }
    .file { width: 81px; background: #5a9fba; color: #fff; display: flex; align-items: center; justify-content: center; margin-right: 2px; padding-bottom: 2px; }
    .tab { padding: 0 13px 2px; display: flex; align-items: center; color: #333; white-space: nowrap; }
    .tab.on { background: #fff; color: #0e7fa3; }
    .tab.latin { letter-spacing: 0.2px; }
    .tabs-end { margin-left: auto; display: flex; align-items: center; padding-right: 5px; }
    .find {
      width: 125px; height: 20px; margin-right: 6px; background: #fff; border: 1px solid #aaa;
      display: flex; align-items: center; justify-content: space-between; padding: 0 1px; font-size: 12px; color: #b4b4b4;
    }
    .end-ic { width: 26px; display: flex; justify-content: center; }

    .ribbon { height: 93px; display: flex; flex: none; border-bottom: 1px solid #dcdcdc; position: relative; }
    .group { display: flex; flex-direction: column; flex: none; }
    .group-body { height: 75px; display: flex; }
    .group-foot { height: 17px; position: relative; text-align: center; color: #1b7fa2; font-size: 11px; line-height: 17px; padding-right: 18px; }
    .group-foot .ic { position: absolute; right: 6px; top: 5px; }
    .gsep { width: 1px; margin: 5px 0 4px; background: #dcdcdc; flex: none; }
    .ribbon-end { position: absolute; right: 7px; bottom: 7px; }

    .big { display: flex; flex-direction: column; align-items: center; flex: none; color: #333; padding-top: 5px; }
    .big-ic { height: 36px; display: flex; align-items: flex-start; justify-content: center; }
    .big-lb { line-height: 16px; text-align: center; white-space: nowrap; }
    .big.off { color: #c4c4c4; }
    .big.car .big-ic { padding-top: 15px; }
    .blank { width: 32px; height: 32px; border: 1px solid #999; background: #fff; }
    .more { width: 42px; margin-left: auto; margin-right: 2px; }
    .more-box { width: 37px; height: 34px; margin: -1px 0 3px; border: 1px solid #dcdcdc; border-radius: 3px; display: flex; align-items: center; justify-content: center; }
    .more-tri { margin-top: 4px; }

    .stack { display: flex; flex-direction: column; flex: none; }
    .row-s { display: flex; align-items: center; white-space: nowrap; color: #333; }
    .row-ic { display: flex; justify-content: center; flex: none; }
    .rows-3 { padding-top: 1px; }
    .rows-3 .row-s { height: 22px; }
    .rows-2 { padding-top: 3px; }
    .rows-2 .row-s { height: 34px; }
    .rows-2s { padding-top: 2px; margin-left: 2px; }
    .rows-2s .row-s { height: 22px; }
    .row-s.on { background: #c9e3ea; border: 1px solid #a9d3dc; width: 49px; }
    .ind { padding-left: 4px; }

    .tools { height: 33px; display: flex; align-items: center; flex: none; border-bottom: 2px solid #8f9492; padding-top: 1px; position: relative; }
    .menu-lb { font-size: 11px; color: #222; }
    .tsep { display: block; width: 1px; height: 26px; background: #dcdcdc; }
    .sel {
      width: 100%; height: 20px; border: 1px solid #8a8a8a; background: #fff; color: #222; font-size: 12px;
      display: flex; align-items: center; justify-content: space-between; padding: 0 6px 0 2px;
    }
    .tool { width: 22px; height: 22px; display: flex; align-items: center; justify-content: center; border: 1px solid transparent; }
    .tool.on { background: #c9e3ea; border-color: #a9d3dc; }
    .tools-end { position: absolute; right: 7px; bottom: 5px; }

    .main { flex: 1; display: flex; min-height: 0; }
    .railbar { width: 32px; flex: none; background: #dcdcdc; border-right: 1px solid #a9a9a9; display: flex; flex-direction: column; position: relative; }
    .rail-it { width: 30px; margin-left: 1px; }
    .rail-on { width: 30px; margin-left: 2px; background: #fff; border: 1px solid #a9a9a9; border-right: 0; position: relative; z-index: 1; margin-right: -1px; }

    .panel { width: 332px; flex: none; background: #fff; border-right: 1px solid #a9a9a9; display: flex; flex-direction: column; padding: 0 9px 6px 6px; }
    .panel-head { height: 28px; flex: none; display: flex; align-items: center; justify-content: space-between; padding: 0 7px 0 4px; font-size: 12px; color: #333; }
    .maxi { width: 12px; height: 11px; border: 1px solid #222; border-top-width: 2px; }

    .table { flex: 1; min-height: 0; border: 1px solid #dcdcdc; padding: 1px 1px 2px 0; display: flex; flex-direction: column; margin: 0 0 1px 1px; }
    .cols { display: grid; grid-template-columns: 200px 100px 13px; }
    .thead { height: 21px; flex: none; background: #f0f0f0; border-bottom: 1px solid #d8d8d8; font-size: 12px; color: #444; line-height: 20px; }
    .thead > div { padding-left: 6px; border-right: 1px solid #dcdcdc; overflow: hidden; white-space: nowrap; display: flex; align-items: center; }
    .thead > div:last-child { border: 0; }
    .sort { margin-left: 18px; width: 0; height: 0; border: 5px solid transparent; border-top: 0; border-bottom: 5px solid #222; }
    .tbody { flex: 1; min-height: 0; overflow: hidden; }
    .tr { height: 20px; border-bottom: 1px solid #eee; font-size: 12px; color: #333; }
    .tr:nth-child(even) { background: #f9f9f9; }
    .tr > div { border-right: 1px solid #eee; display: flex; align-items: center; position: relative; white-space: nowrap; }
    .tr > div:last-child { border: 0; }
    .exp { width: 9px; height: 9px; margin-left: 5px; border: 1px solid #ccc; position: relative; flex: none; background: #fff; }
    .plus::before, .minus::before { content: ""; position: absolute; left: 1px; top: 3px; width: 5px; height: 1px; background: #222; }
    .plus::after { content: ""; position: absolute; left: 3px; top: 1px; width: 1px; height: 5px; background: #222; }
    .dot-h { width: 4px; border-top: 1px dotted #999; flex: none; }
    .dot-v { position: absolute; left: 9px; top: 14px; height: 12px; border-left: 1px dotted #999; z-index: 1; }
    .dot-l { position: absolute; left: 28px; top: -1px; width: 9px; height: 11px; border-left: 1px dotted #999; border-bottom: 1px dotted #999; }
    .t-ic { margin-right: 2px; }
    .chk { margin-left: 3px; margin-right: 3px; }
    .t-csys { margin-left: 1px; }
    .t-bold { font-weight: 700; color: #222; margin-left: 3px; }
    .ind4 { padding-left: 40px; }
    .latest { padding-left: 6px; }

    .hscroll { height: 15px; flex: none; background: #efefef; display: flex; align-items: center; justify-content: space-between; padding: 0 4px; position: relative; }
    .thumb { position: absolute; left: 17px; top: 0; width: 216px; height: 15px; background: #c8c8c8; }
    .split { height: 5px; flex: none; background: #dedede; border: 1px solid #b4b4b4; margin-right: -1px; }
    .acc { height: 24px; flex: none; border-bottom: 2px solid #d2d2d2; display: flex; align-items: center; justify-content: space-between; color: #0e87ad; font-size: 14px; padding: 1px 5px 0 7px; }
    .acc .ic { margin-top: 0; }

    .work { flex: 1; min-width: 0; display: flex; flex-direction: column; }
    .docbar { height: 23px; flex: none; border-bottom: 2px solid #5a9fba; display: flex; }
    .doctab { width: 134px; height: 21px; background: #5a9fba; color: #fff; display: flex; align-items: center; font-size: 12.5px; padding-left: 7px; gap: 5px; }
    .view { flex: 1; position: relative; border-right: 2px solid #d6d6d6; background: linear-gradient(#b4b4b6, #e4e5e7 85%, #e6e7e9); }
    .csys { position: absolute; left: 736px; top: 257px; }
    .triad { position: absolute; left: 49px; top: 694px; }

    .status { height: 9px; flex: none; border-top: 2px solid #a9a9a9; display: flex; overflow: hidden; }
  `;

  render() {
    return html`
      <svg class="defs" aria-hidden="true">
        <defs>
          <linearGradient id="gBlue" x1="0" y1="0" x2="1" y2="1"><stop offset="0" stop-color="#9db8ee" /><stop offset="1" stop-color="#3058c8" /></linearGradient>
          <linearGradient id="gCone" x1="0" y1="0" x2="0" y2="1"><stop offset="0" stop-color="#2fa8d8" /><stop offset=".35" stop-color="#66c34a" /><stop offset=".6" stop-color="#f0c833" /><stop offset=".85" stop-color="#e0542c" /><stop offset="1" stop-color="#c8181c" /></linearGradient>
          <linearGradient id="gFlow" x1="0" y1="0" x2="1" y2="0"><stop offset="0" stop-color="#d8362c" /><stop offset=".4" stop-color="#f0d030" /><stop offset=".7" stop-color="#44b84a" /><stop offset="1" stop-color="#2a5ad8" /></linearGradient>
          <linearGradient id="gWin" x1="0" y1="0" x2="1" y2="1"><stop offset="0" stop-color="#bcd6ee" /><stop offset="1" stop-color="#ffffff" /></linearGradient>
          <linearGradient id="gHelp" x1="0" y1="0" x2="0" y2="1"><stop offset="0" stop-color="#7fa4ec" /><stop offset="1" stop-color="#1f55c8" /></linearGradient>
          <linearGradient id="gClock" x1="0" y1="0" x2="1" y2="1"><stop offset="0" stop-color="#f4f8ff" /><stop offset="1" stop-color="#bcd2f2" /></linearGradient>
          <linearGradient id="gRamp" x1="0" y1="0" x2="0" y2="1"><stop offset="0" stop-color="#e01818" /><stop offset=".25" stop-color="#f0e020" /><stop offset=".5" stop-color="#20d040" /><stop offset=".75" stop-color="#20b0e0" /><stop offset="1" stop-color="#1020d0" /></linearGradient>
          <radialGradient id="gBall" cx=".4" cy=".35"><stop offset="0" stop-color="#ffffff" /><stop offset="1" stop-color="#8a8a8a" /></radialGradient>
          <filter id="soft"><feGaussianBlur stdDeviation="2.5" /></filter>
          <filter id="soft1"><feGaussianBlur stdDeviation=".7" /></filter>
        </defs>
      </svg>

      <div class="window">
        <div class="titlebar">${place(titleItems)}</div>
        <div class="shadow"></div>

        <div class="tabs">
          <div class="file">文件(F)</div>
          ${tabs.map((n) => html`<div class="tab ${n === "应用模块" ? "on" : ""} ${n.includes("UG") ? "latin" : ""}">${n}</div>`)}
          <div class="tabs-end">
            <div class="find"><span>查找命令</span>${q.search}</div>
            <div class="end-ic">${q.full}</div>
            <div class="end-ic">${q.up}</div>
            <div class="end-ic">${q.help}</div>
          </div>
        </div>

        <div class="ribbon">
          ${groups.map((g) => html`
            <div class="group" style="width:${g.w}px">
              <div class="group-body" style="padding-left:${g.pad}px">${g.body}</div>
              <div class="group-foot">${g.label}${g.label ? caret : nothing}</div>
            </div>
            <div class="gsep"></div>`)}
          <div class="ribbon-end">${caret}</div>
        </div>

        <div class="tools">
          ${place([
            { c: 18, w: 20, t: t.menu },
            { c: 50, w: 42, t: html`<span class="menu-lb">菜单(M)</span>` },
            { c: 78, w: 7, t: tri },
            { c: 86, w: 1, t: html`<i class="tsep"></i>` },
            { c: 165.5, w: 133, t: html`<div class="sel"><span>无选择过滤器</span>${tri}</div>` },
            { c: 311, w: 140, t: html`<div class="sel"><span>整个装配</span>${tri}</div>` },
            ...toolItems(toolbar),
            { c: 986, w: 1, t: html`<i class="tsep"></i>` },
            ...toolItems(toolbar2),
            { c: 1273, w: 1, t: html`<i class="tsep"></i>` },
          ])}
          <div class="tools-end">${caret}</div>
        </div>

        <div class="main">
          <div class="railbar">${place(railItems, 180, "top")}</div>

          <div class="panel">
            <div class="panel-head"><span>部件导航器</span><div class="maxi"></div></div>
            <div class="table">
              <div class="cols thead">
                <div>名称<i class="sort"></i></div>
                <div>最新</div>
                <div>附</div>
              </div>
              <div class="tbody">
                <div class="cols tr">
                  <div>${expander(false)}<i class="dot-h"></i><i class="dot-v"></i><span class="t-ic">${tree.view}</span>模型视图</div><div></div><div></div>
                </div>
                <div class="cols tr">
                  <div>${expander(false)}<i class="dot-h"></i><i class="dot-v"></i><span class="chk">${tree.check}</span><span class="t-ic">${tree.cam}</span>摄像机</div><div></div><div></div>
                </div>
                <div class="cols tr">
                  <div>${expander(true)}<i class="dot-h"></i><span class="t-ic">${tree.folder}</span>模型历史记录</div><div></div><div></div>
                </div>
                <div class="cols tr">
                  <div class="ind4"><i class="dot-l"></i>${tree.box}<span class="t-csys">${tree.csys}</span><span class="t-bold">基准坐标系 (0)</span></div>
                  <div class="latest">${tree.check}</div><div></div>
                </div>
                ${Array.from({ length: 31 }, () => html`<div class="cols tr"><div></div><div></div><div></div></div>`)}
              </div>
              <div class="hscroll">
                <div class="thumb"></div>
                ${ic(8, 10, svg`<path d="M6 1 2 5l4 4" fill="none" stroke="#555" stroke-width="2"/>`)}
                ${ic(8, 10, svg`<path d="M2 1l4 4-4 4" fill="none" stroke="#555" stroke-width="2"/>`)}
              </div>
            </div>
            <div class="split"></div>
            <div class="acc"><span>相关性</span>${chevron}</div>
            <div class="acc"><span>细节</span>${chevron}</div>
            <div class="acc"><span>预览</span>${chevron}</div>
          </div>

          <div class="work">
            <div class="docbar">
              <div class="doctab">
                ${ic(14, 15, svg`<path d="M2 3l4-2 3 2v6l4-1v4l-6 3-5-3z" fill="#3a6ad8" stroke="#dfe9fb" stroke-width=".7"/>`)}
                <span>_model1.prt</span>
                ${ic(10, 12, svg`<path d="M1 1h5l3 3v7H1z" fill="#fff"/><path d="M3 6h6M7 4l2 2-2 2" stroke="#5a9fba" fill="none"/>`)}
                ${ic(10, 10, svg`<path d="M1.5 1.5l7 7M8.5 1.5l-7 7" stroke="#fff" stroke-width="2"/>`)}
              </div>
            </div>
            <div class="view">
              <svg class="csys" width="180" height="210" viewBox="0 0 540 630">
                <g fill="none" stroke-width="3">
                  <path d="M125 125V450" stroke="#8e90ee" stroke-width="4" />
                  <path d="M282 215V400" stroke="#9a9cf0" stroke-width="4" />
                  <path d="M253 322V508" stroke="#1414e8" />
                  <path d="M125 262 282 215M125 262 253 322M282 400 408 462 253 508" stroke="#2222e8" stroke-dasharray="4 2" />
                  <path d="M125 450 345 550M125 450 400 366" stroke="#2222e8" stroke-dasharray="4 2" />
                  <path d="M103 450H148M125 428V472" stroke="#0a0ac8" stroke-width="6" />
                </g>
                <path d="M125 85 135 125H116Z M435 355 392 374 395 360Z M375 565 342 560 350 545Z" fill="#0808c8" />
                <path d="M392 362 414 358 412 372 396 375Z" fill="#0808c8" />
                <g font-family="Liberation Sans" font-size="36" fill="#6c6ce4">
                  <text x="113" y="74">Z</text><text x="440" y="364">Y</text><text x="378" y="586">X</text>
                </g>
              </svg>
              <svg class="triad" width="65" height="75" viewBox="1240 20 195 225">
                <path d="M1295 112 1348 92 1398 112 1398 182 1345 205 1295 180Z" fill="#b4b4b4" fill-opacity=".5" stroke="#bdbdbd" stroke-width="3" />
                <path d="M1295 112 1345 132 1398 112M1345 132V205M1348 92V160" fill="none" stroke="#bdbdbd" stroke-width="3" />
                <path d="M1295 180 1368 156" stroke="#b5cfb5" stroke-width="9" />
                <path d="M1395 148 1360 148 1368 168Z" fill="#b5cfb5" />
                <path d="M1288 176V85" stroke="#0a3cd0" stroke-width="9" />
                <path d="M1288 58 1299 92H1277Z" fill="#0a3cd0" />
                <path d="M1292 184 1345 208" stroke="#c81e1e" stroke-width="9" />
                <path d="M1372 218 1338 218 1348 198Z" fill="#c81e1e" />
                <circle cx="1287" cy="180" r="10" fill="url(#gBall)" />
                <g font-family="Liberation Sans" font-size="32">
                  <text x="1277" y="54" fill="#2a50e0">Z</text>
                  <text x="1394" y="158" fill="#3aa04a">Y</text>
                  <text x="1370" y="238" fill="#d83a3a">X</text>
                </g>
              </svg>
            </div>
          </div>
        </div>

        <div class="status">
          ${place([
            { c: 1837, w: 16, t: html`<svg class="ic" width="16" height="7" viewBox="0 0 16 7"><rect x=".5" y=".5" width="15" height="8" fill="#f2f2f2" stroke="#b4b4b4" /></svg>` },
            { c: 1857, w: 16, t: html`<svg class="ic" width="16" height="7" viewBox="0 0 16 7"><path d="M1 3V.5h3M12 .5h3V3" fill="none" stroke="#888" /><rect x="3.5" y="3" width="9" height="6" fill="#fff" stroke="#555" /></svg>` },
          ])}
        </div>
      </div>

      <svg class="wall" viewBox="0 0 52 1027">
        <defs>
          <linearGradient id="gWall" x1="0" y1="0" x2="0" y2="1">
            <stop offset="0" stop-color="#1b2738" /><stop offset=".3" stop-color="#1f2535" />
            <stop offset=".5" stop-color="#1e2a3e" /><stop offset=".8" stop-color="#1a2438" /><stop offset="1" stop-color="#0f1a2e" />
          </linearGradient>
        </defs>
        <rect width="52" height="1027" fill="url(#gWall)" />
        <g filter="url(#soft)">
          <ellipse cx="36" cy="77" rx="13" ry="7" fill="#4c5670" transform="rotate(15 36 77)" />
          <ellipse cx="50" cy="197" rx="5" ry="18" fill="#4a5060" />
          <ellipse cx="42" cy="328" rx="14" ry="18" fill="#212e44" />
        </g>
        <g filter="url(#soft1)">
          <path d="M50 20 41 37 45 55 52 40Z" fill="#76866f" />
          <path d="M2 79 15 107 22 108 29 127 40 140 25 132 15 120 7 97Z" fill="#7a8a72" />
          <path d="M39 128 52 148V140Z" fill="#7a8a72" />
          <path d="M35 110 41 122 47 127 40 119Z" fill="#5f6e60" />
          <path d="M0 317 8 312" stroke="#7a8494" stroke-width="1" />
          <ellipse cx="28" cy="227" rx="2" ry="4" fill="#5a2a3c" />
          <ellipse cx="39" cy="240" rx="2" ry="3" fill="#3f2536" />
          <ellipse cx="14" cy="43" rx="2" ry="5" fill="#3f2a3a" transform="rotate(35 14 43)" />
          <ellipse cx="7" cy="18" rx="5" ry="1.6" fill="#35283a" transform="rotate(25 7 18)" />
        </g>
      </svg>
    `;
  }
}
